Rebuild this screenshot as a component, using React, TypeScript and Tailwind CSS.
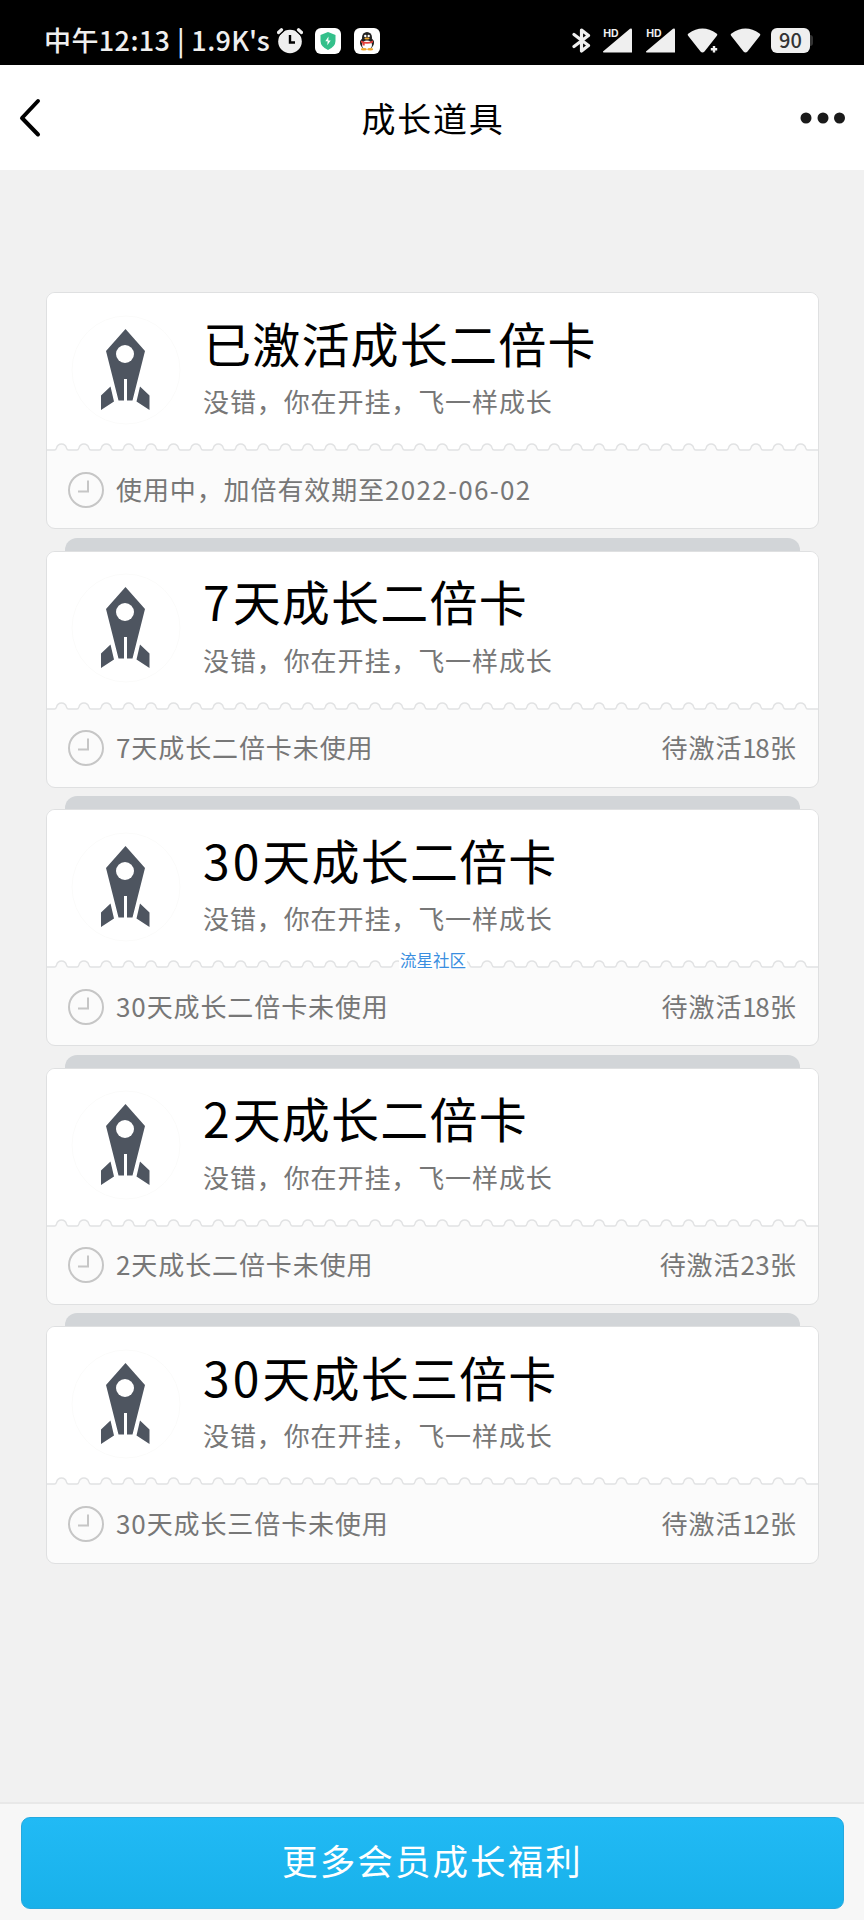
import { Fragment } from 'react';

type Card = {
  id: number;
  days?: string;
  title: string;
  status: string;
  until?: string;
  count?: string;
  badge?: string;
};

const cards: Card[] = [
  { id: 1, title: '已激活成长二倍卡', status: '使用中，加倍有效期至', until: '2022-06-02' },
  { id: 2, days: '7', title: '天成长二倍卡', status: '7天成长二倍卡未使用', count: '18' },
  { id: 3, days: '30', title: '天成长二倍卡', status: '30天成长二倍卡未使用', count: '18', badge: '流星社区' },
  { id: 4, days: '2', title: '天成长二倍卡', status: '2天成长二倍卡未使用', count: '23' },
  { id: 5, days: '30', title: '天成长三倍卡', status: '30天成长三倍卡未使用', count: '12' },
];

// perforated edge: 34 notches, 22.4px apart
const notches = Array.from({ length: 34 }, (_, i) => {
  const x = 14.5 + i * 22.4;
  const at = (dx: number) => (x + dx).toFixed(1);
  return `H${at(-7)} Q${at(-5.6)} 7 ${at(-5)} 5 C${at(-3.6)} -0.4 ${at(3.6)} -0.4 ${at(5)} 5 Q${at(5.6)} 7 ${at(7)} 7`;
}).join(' ');

function Rocket() {
  return (
    <svg width="110" height="110" viewBox="0 0 110 110">
      <circle cx="55" cy="55" r="54" fill="#fff" stroke="#fbfbfa" />
      <path fill="#4e5560" d="M54.5 14 L74 36 L61.5 85.5 H56 V64 H53 V85.5 H47.5 L35 36 Z" />
      <circle cx="54" cy="39" r="9" fill="#fff" />
      <path fill="#4e5560" d="M39.5 71.5 L43 86.5 L30 95 V80.5 Z M69 71.5 L78.5 80.5 V95 L65.5 86.5 Z" />
    </svg>
  );
}

function Clock() {
  return (
    <svg width="36" height="36" viewBox="0 0 36 36" fill="none" stroke="#c6c6c6" strokeWidth="2">
      <circle cx="18" cy="18" r="17" />
      <path d="M20 8.5 V19.5 H10" />
    </svg>
  );
}

function StatusBar() {
  return (
    <div className="flex h-[65px] shrink-0 items-start justify-between bg-black pl-[44px] pr-[51px] pt-[28px] text-[#efefef]">
      <div className="flex h-[25px] items-center">
        <span className="w-[226px] whitespace-nowrap pb-[2px] text-[27px] font-medium leading-[25px] tracking-[0.4px]">中午12:13 | 1.9K's</span>
        <svg className="ml-[7px]" width="26" height="26" viewBox="0 0 26 26">
          <circle cx="13" cy="13.5" r="11.8" fill="#efefef" />
          <path d="M1.5 4.5 L4.5 1.8 M21.5 1.8 L24.5 4.5" stroke="#000" strokeWidth="6" strokeLinecap="round" />
          <path d="M1.5 4.5 L4.5 1.8 M21.5 1.8 L24.5 4.5" stroke="#efefef" strokeWidth="3.2" strokeLinecap="round" />
          <path d="M13 7 V14.5 H18" fill="none" stroke="#000" strokeWidth="2.4" />
        </svg>
        <svg className="ml-[12px]" width="26" height="26" viewBox="0 0 26 26">
          <rect width="26" height="26" rx="6" fill="#fff" />
          <path d="M13 4 L20.5 7 V13 Q20.5 18.5 13 22 Q5.5 18.5 5.5 13 V7 Z" fill="#34c08b" />
          <path d="M13.5 8.5 L10.3 13.2 H12.6 L12.3 17.2 L15.7 12.4 H13.3 Z" fill="#fff" />
        </svg>
        <svg className="ml-[13px]" width="26" height="26" viewBox="0 0 26 26">
          <rect width="26" height="26" rx="6" fill="#fff" />
          <ellipse cx="13" cy="15" rx="7" ry="6.2" fill="#222" />
          <ellipse cx="13" cy="9.5" rx="5" ry="5.5" fill="#222" />
          <ellipse cx="13" cy="17" rx="5" ry="4.5" fill="#fff" />
          <ellipse cx="9.8" cy="21.2" rx="3" ry="1.2" fill="#eda52a" />
          <ellipse cx="16.2" cy="21.2" rx="3" ry="1.2" fill="#eda52a" />
          <circle cx="11.3" cy="8" r="1.2" fill="#fff" />
          <circle cx="14.7" cy="8" r="1.2" fill="#fff" />
          <ellipse cx="13" cy="10.5" rx="2.6" ry="1" fill="#eda52a" />
          <path d="M7 12.5 Q13 15.5 19 12.5 V14.5 Q13 17 7 14.5 Z" fill="#e5403b" />
          <path d="M8.5 14 h2.2 v3.5 h-2.2 z" fill="#e5403b" />
        </svg>
      </div>
      <div className="flex h-[25px] items-center">
        <svg width="19" height="25" viewBox="0 0 19 25" fill="none" stroke="#efefef" strokeWidth="3.2" strokeLinejoin="round" strokeLinecap="round">
          <path d="M2 6.5 L16.5 17.5 L9.5 23 V2 L16.5 7.5 L2 18.5" />
        </svg>
        {[0, 1].map((n) => (
          <svg key={n} className={n === 0 ? 'ml-[11px]' : 'ml-[12px]'} width="31" height="25" viewBox="0 0 31 25">
            <path d="M1 23.5 L28 0.8 Q30 0 30 2 V24.5 H2 Q0.5 24.5 1 23.5 Z" fill="#efefef" />
            <text x="1.2" y="9" fontSize="10.5" fontWeight="700" fill="#efefef" stroke="#000" strokeWidth="1.5" paintOrder="stroke" fontFamily="Inter">HD</text>
          </svg>
        ))}
        <svg className="ml-[11px]" width="31" height="25" viewBox="0 0 31 25">
          <path d="M1.3 8 Q0 6.5 1.5 5.5 Q15.5 -4.5 29.5 5.5 Q31 6.5 29.7 8 L17.5 23.5 Q15.5 25.5 13.5 23.5 Z" fill="#efefef" />
          <path d="M27 17 V25 M23 21 H31" stroke="#000" strokeWidth="5" />
          <path d="M27 18 V24.4 M23.8 21.2 H30.2" stroke="#efefef" strokeWidth="2.4" />
        </svg>
        <svg className="ml-[12px]" width="31" height="25" viewBox="0 0 31 25">
          <path d="M1.3 8 Q0 6.5 1.5 5.5 Q15.5 -4.5 29.5 5.5 Q31 6.5 29.7 8 L17.5 23.5 Q15.5 25.5 13.5 23.5 Z" fill="#efefef" />
        </svg>
        <span className="ml-[10px] flex h-[25px] w-[39px] items-center justify-center rounded-[6px] bg-[#efefef] pb-[2px] text-[20px] font-medium leading-none text-[#333]">90</span>
        <span className="h-[11px] w-[3px] rounded-r-[3px] bg-[#333]" />
      </div>
    </div>
  );
}

export default function App() {
  return (
    <div className="flex h-[1920px] w-[864px] flex-col overflow-hidden bg-[#f1f1f1] font-['Noto_Sans_CJK_SC','Noto_Sans',sans-serif]">
      <StatusBar />

      <header className="flex h-[105px] shrink-0 items-center justify-between bg-white pl-[18px] pr-[19px]">
        <svg width="64" height="40" viewBox="0 0 64 40" fill="none" stroke="#000" strokeWidth="4" strokeLinecap="round" strokeLinejoin="round">
          <path d="M20 3 L4 20 L20 36.5" />
        </svg>
        <h1 className="pl-[3px] text-[34px] leading-none tracking-[1.8px] text-black">成长道具</h1>
        <svg width="64" height="12" viewBox="0 0 64 12" fill="#1a1a1a">
          <circle cx="25" cy="6" r="5.5" />
          <circle cx="42" cy="6" r="5.5" />
          <circle cx="58.5" cy="6" r="5.5" />
        </svg>
      </header>

      <main className="flex grow flex-col pl-[46px] pr-[45px] pt-[122px]">
        {cards.map((card, index) => (
          <Fragment key={card.id}>
            {index > 0 && <div className="mx-[19px] mt-[8.4px] h-[13px] shrink-0 rounded-t-[12px] bg-[#d2d5d8]" />}
            <section className="flex h-[237.2px] shrink-0 flex-col overflow-hidden rounded-[9px] border border-[#dfe0e1] bg-[#fbfbfb]">
              <div className="flex h-[150px] shrink-0 bg-white pl-[24px] pt-[21.5px]">
                <Rocket />
                <div className="flex flex-col pl-[22px]">
                  <h2 className="-mt-[3px] h-[60px] whitespace-nowrap text-[48px] leading-[60px] tracking-[1.2px] text-black">
                    {card.days && <span className="tracking-[3px]">{card.days}</span>}
                    {card.title}
                  </h2>
                  <p className="mt-[11.5px] whitespace-nowrap text-[26px] leading-[36px] tracking-[0.9px] text-[#777]">没错，你在开挂，飞一样成长</p>
                </div>
              </div>
              <div className="relative">
                <svg className="block" width="771" height="9" viewBox="0 0 771 9">
                  <path d={`M0 7 ${notches} H771 V0 H0 Z`} fill="#fff" />
                  <path d={`M0 7 ${notches} H771`} fill="none" stroke="#e1e2e3" strokeWidth="1.4" />
                </svg>
                {card.badge && (
                  <span className="absolute left-[352px] top-[-8px] bg-white px-px text-[16.5px] leading-[17px] text-[#3a8ee0]">{card.badge}</span>
                )}
              </div>
              <div className="flex h-[75px] items-center pl-[21px] pr-[21px] text-[26px] tracking-[0.9px] text-[#777]">
                <Clock />
                <span className="ml-[12px] whitespace-nowrap pb-[3px]">
                  {card.status}
                  {card.until && <span className="tracking-[1.3px]">{card.until}</span>}
                </span>
                {card.count && (
                  <span className="ml-auto whitespace-nowrap pb-[3px]">
                    待激活
                    {card.count.split('').map((digit, i) => (
                      <span key={i} className={digit === '1' ? 'tracking-[-1.5px]' : 'tracking-[0.4px]'}>{digit}</span>
                    ))}
                    张
                  </span>
                )}
              </div>
            </section>
          </Fragment>
        ))}
      </main>

      <footer className="h-[118px] shrink-0 border-t-2 border-[#e8e8e8] bg-[#f7f7f7] pl-[21px] pr-[20px] pt-[13px]">
        <button className="h-[92px] w-full rounded-[9px] border border-[#25a9df] bg-linear-to-b from-[#21baf5] to-[#18b1ea] pb-[6px] text-[35.5px] leading-none tracking-[2.1px] text-white">
          更多会员成长福利
        </button>
      </footer>
    </div>
  );
}
